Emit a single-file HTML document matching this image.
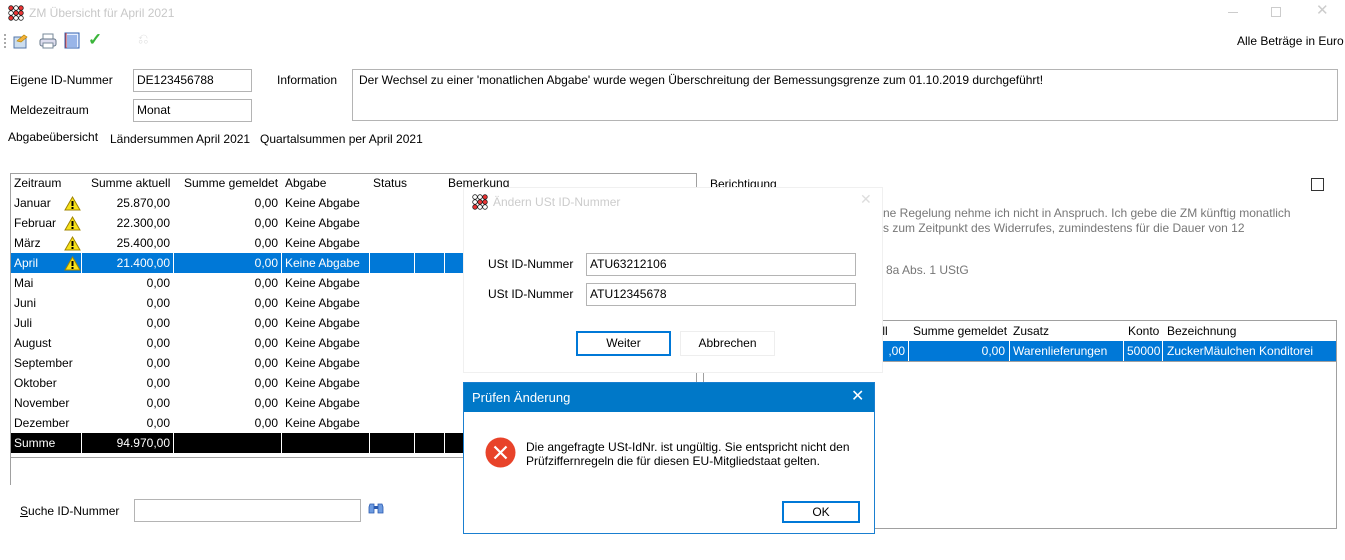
<!DOCTYPE html>
<html><head><meta charset="utf-8">
<style>
*{box-sizing:border-box;margin:0;padding:0}
body{width:1345px;height:560px;background:#fff;font-family:"Liberation Sans",sans-serif;font-size:12px;color:#000;position:relative;overflow:hidden}
.a{position:absolute;white-space:nowrap}
.inp{position:absolute;border:1px solid #b4b4b4;background:#fff;padding:3px 0 0 3px}
.c{position:absolute;height:20px;line-height:20px;padding:0 3px;white-space:nowrap}
.r{text-align:right}
.sel{background:#0078d7;color:#fff}
.blk{background:#000;color:#fff}
.g{color:#aaa}
</style></head><body>
<svg class="a" style="left:8px;top:5px" width="16" height="16" viewBox="0 0 16 16">
<g stroke="#222" stroke-width=".8" fill="#fff">
<circle cx="3" cy="3" r="2.3" fill="#e33"/><circle cx="8" cy="3" r="2.3"/><circle cx="13" cy="3" r="2.3" fill="#e33"/>
<circle cx="3" cy="8" r="2.3"/><circle cx="8" cy="8" r="2.3" fill="#e33"/><circle cx="13" cy="8" r="2.3" fill="#e33"/>
<circle cx="3" cy="13" r="2.3" fill="#e33"/><circle cx="8" cy="13" r="2.3"/><circle cx="13" cy="13" r="2.3"/></g></svg>
<div class="a g" style="left:29px;top:6px;font-size:12px;color:#c8c8c8">ZM Übersicht für April 2021</div>
<div class="a" style="left:1228px;top:12px;width:10px;border-top:1px solid #ccc"></div>
<div class="a" style="left:1271px;top:7px;width:10px;height:10px;border:1px solid #ccc"></div>
<div class="a" style="left:1316px;top:1px;color:#ccc;font-size:15px">✕</div>
<div class="a" style="left:4px;top:34px;height:14px;border-left:2px dotted #aaa"></div>
<svg class="a" style="left:12px;top:32px" width="18" height="17"><rect x="2" y="5" width="12" height="11" fill="#cde" stroke="#57a"/><path d="M5 9 L12 3 L15 5 L9 10Z" fill="#f4b23c" stroke="#b80" stroke-width=".7"/></svg>
<svg class="a" style="left:39px;top:32px" width="18" height="17"><rect x="4" y="2" width="10" height="6" fill="#fff" stroke="#789"/><rect x="1" y="7" width="16" height="7" rx="2" fill="#dde" stroke="#678"/><rect x="4" y="11" width="10" height="5" fill="#fff" stroke="#789"/></svg>
<svg class="a" style="left:64px;top:32px" width="16" height="17"><rect x="1" y="1" width="14" height="15" fill="#e8f0ff" stroke="#3060b0"/><path d="M3 4h10M3 6h10M3 8h10M3 10h10M3 12h10M3 14h10" stroke="#4a7ad0"/><path d="M2 1v15" stroke="#c33"/></svg>
<div class="a" style="left:88px;top:30px;color:#3ab53a;font-size:17px;font-weight:bold">✓</div>
<div class="a" style="left:138px;top:31px;color:#ddd;font-size:13px">⎌</div>
<div class="a" style="left:1237px;top:34px">Alle Beträge in Euro</div>
<div class="a" style="left:10px;top:73px">Eigene ID-Nummer</div>
<div class="inp" style="left:133px;top:69px;width:119px;height:23px">DE123456788</div>
<div class="a" style="left:10px;top:103px">Meldezeitraum</div>
<div class="inp" style="left:133px;top:99px;width:119px;height:23px">Monat</div>
<div class="a" style="left:277px;top:73px">Information</div>
<div class="inp" style="left:352px;top:69px;width:986px;height:52px;padding:3px 0 0 6px">Der Wechsel zu einer 'monatlichen Abgabe' wurde wegen Überschreitung der Bemessungsgrenze zum 01.10.2019 durchgeführt!</div>
<div class="a" style="left:8px;top:130px">Abgabeübersicht</div>
<div class="a" style="left:110px;top:132px">Ländersummen April 2021</div>
<div class="a" style="left:260px;top:132px">Quartalsummen per April 2021</div>
<div class="a" style="left:10px;top:173px;width:687px;height:312px;border:1px solid #a0a0a0;border-bottom:none"></div>
<div class="a" style="left:11px;top:457px;width:686px;border-top:1px solid #a0a0a0"></div>
<div id="lt"></div>
<div class="a" style="left:20px;top:504px"><u>S</u>uche ID-Nummer</div>
<div class="inp" style="left:134px;top:499px;width:227px;height:23px"></div>
<svg class="a" style="left:368px;top:502px" width="16" height="12"><path d="M2 2h4v9H1V5Z M10 2h4l1 3v6h-5Z" fill="#6d9be0" stroke="#2a5ab0" stroke-width=".8"/><rect x="6" y="4" width="4" height="3" fill="#2a5ab0"/></svg>
<div class="a" style="left:710px;top:177px">Berichtigung</div>
<div class="a" style="left:1311px;top:178px;width:13px;height:13px;border:1px solid #333"></div>
<div class="a" style="left:883px;top:206px;color:#777">ne Regelung nehme ich nicht in Anspruch. Ich gebe die ZM künftig monatlich</div>
<div class="a" style="left:883px;top:221px;color:#777">s zum Zeitpunkt des Widerrufes, zumindestens für die Dauer von 12</div>
<div class="a" style="left:886px;top:263px;color:#777">8a Abs. 1 UStG</div>
<div class="a" style="left:703px;top:320px;width:634px;height:209px;border:1px solid #a0a0a0"></div>
<div class="a" style="left:704px;top:361px;width:632px;border-top:1px solid #a0a0a0"></div>
<div class="c" style="left:866px;top:321px">uell</div>
<div class="c" style="left:910px;top:321px">Summe gemeldet</div>
<div class="c" style="left:1010px;top:321px">Zusatz</div>
<div class="c" style="left:1125px;top:321px">Konto</div>
<div class="c" style="left:1164px;top:321px">Bezeichnung</div>
<div class="c sel" style="left:873px;top:341px;width:463px"></div>
<div class="c sel r" style="left:868px;top:341px;width:40px">,00</div>
<div class="c sel r" style="left:910px;top:341px;width:98px">0,00</div>
<div class="c sel" style="left:1010px;top:341px">Warenlieferungen</div>
<div class="c sel r" style="left:1124px;top:341px;width:39px">50000</div>
<div class="c sel" style="left:1164px;top:341px">ZuckerMäulchen Konditorei</div>
<div class="a" style="left:908px;top:341px;height:20px;border-left:1px solid #fff"></div>
<div class="a" style="left:1009px;top:341px;height:20px;border-left:1px solid #fff"></div>
<div class="a" style="left:1123px;top:341px;height:20px;border-left:1px solid #fff"></div>
<div class="a" style="left:1162px;top:341px;height:20px;border-left:1px solid #fff"></div>
<div class="a" style="left:463px;top:187px;width:420px;height:186px;background:#fff;border:1px solid #f0f0f0"></div>
<svg class="a" style="left:472px;top:194px" width="16" height="16" viewBox="0 0 16 16">
<g stroke="#222" stroke-width=".8" fill="#fff">
<circle cx="3" cy="3" r="2.3"/><circle cx="8" cy="3" r="2.3"/><circle cx="13" cy="3" r="2.3" fill="#e33"/>
<circle cx="3" cy="8" r="2.3"/><circle cx="8" cy="8" r="2.3" fill="#e33"/><circle cx="13" cy="8" r="2.3" fill="#e33"/>
<circle cx="3" cy="13" r="2.3" fill="#e33"/><circle cx="8" cy="13" r="2.3"/><circle cx="13" cy="13" r="2.3"/></g></svg>
<div class="a" style="left:493px;top:195px;color:#ccc">Ändern USt ID-Nummer</div>
<div class="a" style="left:860px;top:191px;color:#ddd;font-size:14px">✕</div>
<div class="a" style="left:488px;top:257px">USt ID-Nummer</div>
<div class="inp" style="left:586px;top:253px;width:270px;height:23px">ATU63212106</div>
<div class="a" style="left:488px;top:287px">USt ID-Nummer</div>
<div class="inp" style="left:586px;top:283px;width:270px;height:23px">ATU12345678</div>
<div class="a" style="left:576px;top:331px;width:95px;height:25px;border:2px solid #0078d7;text-align:center;line-height:21px">Weiter</div>
<div class="a" style="left:680px;top:331px;width:95px;height:25px;border:1px solid #eee;text-align:center;line-height:23px">Abbrechen</div>
<div class="a" style="left:463px;top:382px;width:412px;height:152px;background:#fff;border:1px solid #1a7fd0"></div>
<div class="a" style="left:464px;top:383px;width:410px;height:29px;background:#0078c8"></div>
<div class="a" style="left:472px;top:390px;color:#fff;font-size:13px">Prüfen Änderung</div>
<div class="a" style="left:851px;top:386px;color:#fff;font-size:16px">✕</div>
<svg class="a" style="left:485px;top:437px" width="31" height="31"><circle cx="15.5" cy="15.5" r="15" fill="#e8432a"/><path d="M9.5 9.5l12 12M21.5 9.5l-12 12" stroke="#fff" stroke-width="2.2"/></svg>
<div class="a" style="left:526px;top:440px">Die angefragte USt-IdNr. ist ungültig. Sie entspricht nicht den</div>
<div class="a" style="left:526px;top:454px">Prüfziffernregeln die für diesen EU-Mitgliedstaat gelten.</div>
<div class="a" style="left:782px;top:501px;width:78px;height:22px;border:2px solid #0078d7;text-align:center;line-height:18px">OK</div>
<script>
var rows=[["Zeitraum","Summe aktuell","Summe gemeldet","Abgabe","Status","Bemerkung",0],
["Januar","25.870,00","0,00","Keine Abgabe","","",1],["Februar","22.300,00","0,00","Keine Abgabe","","",1],["März","25.400,00","0,00","Keine Abgabe","","",1],["April","21.400,00","0,00","Keine Abgabe","","",1],
["Mai","0,00","0,00","Keine Abgabe","","",0],["Juni","0,00","0,00","Keine Abgabe","","",0],["Juli","0,00","0,00","Keine Abgabe","","",0],["August","0,00","0,00","Keine Abgabe","","",0],["September","0,00","0,00","Keine Abgabe","","",0],["Oktober","0,00","0,00","Keine Abgabe","","",0],["November","0,00","0,00","Keine Abgabe","","",0],["Dezember","0,00","0,00","Keine Abgabe","","",0],["Summe","94.970,00","","","","",0]];
var cols=[[11,81],[82,173],[174,281],[282,369],[370,414],[415,444],[445,463]];
var h="";
rows.forEach(function(r,i){var y=173+i*20;var cls=i==4?" sel":(i==13?" blk":"");
 if(cls){cols.forEach(function(c){h+='<div class="c'+cls+'" style="left:'+c[0]+'px;top:'+y+'px;width:'+(c[1]-c[0])+'px"></div>'});}
 var hd=i==0;
 h+='<div class="c'+cls+'" style="left:11px;top:'+y+'px;background:none">'+r[0]+'</div>';
 h+='<div class="c'+cls+(hd?'':' r')+'" style="left:'+(hd?88:82)+'px;top:'+y+'px;width:91px;background:none">'+r[1]+'</div>';
 h+='<div class="c'+cls+(hd?'':' r')+'" style="left:'+(hd?181:174)+'px;top:'+y+'px;width:107px;background:none">'+r[2]+'</div>';
 h+='<div class="c'+cls+'" style="left:282px;top:'+y+'px;background:none">'+r[3]+'</div>';
 if(hd){h+='<div class="c" style="left:370px;top:'+y+'px">'+r[4]+'</div><div class="c" style="left:445px;top:'+y+'px">'+r[5]+'</div>';}
 if(r[6])h+='<svg class="a" style="left:64px;top:'+(y+3)+'px" width="17" height="15"><path d="M8.5 1L16 14H1Z" fill="#f7e21a" stroke="#a08400"/><path d="M8.5 5v5" stroke="#000" stroke-width="2"/><rect x="7.5" y="11" width="2" height="2"/></svg>';
});
document.getElementById("lt").outerHTML=h;
</script>
</body></html>
